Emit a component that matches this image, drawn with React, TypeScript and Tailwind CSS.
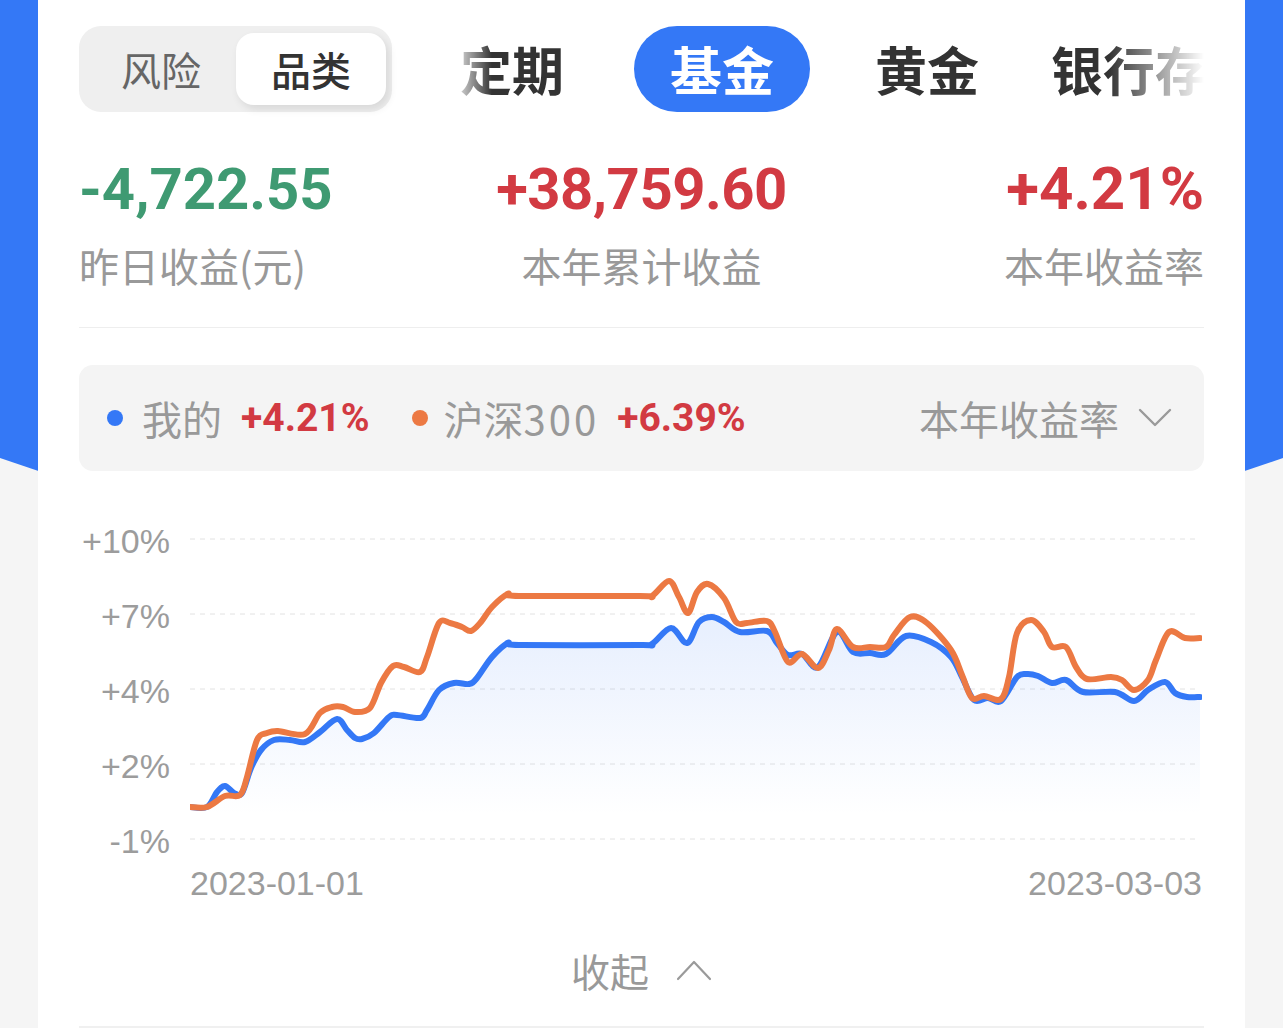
import React from "react";

const CJK = "font-['Noto_Sans_CJK_SC',sans-serif]";
const NUM = "font-['Roboto','Noto_Sans_CJK_SC',sans-serif]";
const AXIS = "font-['Liberation_Sans','Noto_Sans_CJK_SC',sans-serif]";

type Pt = [number, number];

const MINE: Pt[] = [
  [190, 807], [207, 807], [217, 792], [225, 786], [234, 793], [242, 793], [251, 768], [261, 750],
  [274, 740], [290, 740], [305, 742], [320, 732], [337, 719], [347, 730], [355, 738], [362, 739],
  [374, 733], [389, 717], [397, 715], [420, 718], [427, 710], [439, 690], [454, 683], [469, 684],
  [477, 678], [492, 657], [508, 643], [519, 645], [640, 645], [652, 644], [671, 628], [687, 643],
  [699, 622], [712, 617], [724, 622], [740, 632], [767, 631], [777, 643], [788, 655], [802, 654],
  [818, 667], [837, 632], [853, 652], [870, 653], [886, 654], [906, 636], [931, 642], [951, 657],
  [962, 677], [974, 700], [988, 698], [1001, 701], [1017, 677], [1027, 674], [1038, 676], [1052, 683],
  [1066, 680], [1083, 692], [1115, 692], [1134, 701], [1148, 690], [1165, 682], [1175, 693], [1187, 697],
  [1200, 697],
];

const HS300: Pt[] = [
  [190, 807], [207, 807], [225, 796], [240, 795], [247, 777], [257, 740], [267, 733], [278, 731],
  [305, 734], [320, 713], [332, 707], [343, 707], [355, 712], [370, 708], [381, 683], [393, 666],
  [404, 667], [420, 672], [427, 657], [439, 623], [450, 623], [462, 627], [471, 631], [481, 622],
  [492, 607], [508, 594], [519, 596], [640, 596], [652, 596], [669, 581], [679, 597], [688, 613],
  [697, 592], [708, 584], [724, 598], [736, 622], [747, 623], [767, 621], [775, 632], [788, 662],
  [802, 654], [818, 668], [829, 650], [837, 629], [853, 647], [870, 647], [886, 647], [894, 635],
  [910, 617], [927, 623], [951, 650], [962, 675], [972, 698], [984, 696], [1001, 699], [1009, 677],
  [1017, 633], [1031, 620], [1044, 632], [1052, 647], [1066, 647], [1076, 667], [1087, 679], [1111, 677],
  [1122, 680], [1134, 690], [1148, 680], [1156, 660], [1169, 632], [1185, 638], [1200, 638],
];

// catmull-rom -> cubic bezier
function smoothPath(pts: Pt[]) {
  let d = `M${pts[0][0]},${pts[0][1]}`;
  for (let i = 0; i < pts.length - 1; i++) {
    const p0 = pts[i - 1] || pts[i];
    const p1 = pts[i];
    const p2 = pts[i + 1];
    const p3 = pts[i + 2] || p2;
    const c1x = p1[0] + (p2[0] - p0[0]) / 6;
    const c1y = p1[1] + (p2[1] - p0[1]) / 6;
    const c2x = p2[0] - (p3[0] - p1[0]) / 6;
    const c2y = p2[1] - (p3[1] - p1[1]) / 6;
    d += ` C${c1x.toFixed(1)},${c1y.toFixed(1)} ${c2x.toFixed(1)},${c2y.toFixed(1)} ${p2[0]},${p2[1]}`;
  }
  return d;
}

const Y_LABELS = ["+10%", "+7%", "+4%", "+2%", "-1%"];
const GRID_Y = [539, 614, 689, 764, 839];

function Chart() {
  const mine = smoothPath(MINE);
  const hs = smoothPath(HS300);
  return (
    <svg width={1012} height={340} viewBox="190 521 1012 340" className="block">
      <defs>
        <linearGradient id="mineFill" x1="0" y1="600" x2="0" y2="815" gradientUnits="userSpaceOnUse">
          <stop offset="0" stopColor="#3478f6" stopOpacity="0.13" />
          <stop offset="1" stopColor="#3478f6" stopOpacity="0" />
        </linearGradient>
      </defs>
      {GRID_Y.map((y) => (
        <line key={y} x1={190} x2={1200} y1={y} y2={y} stroke="#e2e2e2" strokeWidth={1} strokeDasharray="5 5" />
      ))}
      <path d={`${mine} L1200,839 L190,839 Z`} fill="url(#mineFill)" />
      <path d={mine} fill="none" stroke="#3478f6" strokeWidth={6} strokeLinejoin="round" strokeLinecap="round" />
      <path d={hs} fill="none" stroke="#ec7943" strokeWidth={6} strokeLinejoin="round" strokeLinecap="round" />
    </svg>
  );
}

export default function App() {
  return (
    <div className="relative min-h-screen overflow-hidden bg-[#f5f5f5]">
      {/* blue header backdrop */}
      <div className="absolute inset-x-0 top-0 h-[700px] bg-[#3478f6] [clip-path:polygon(0_0,100%_0,100%_458px,50%_675px,0_458px)]" />

      <div className="relative mx-[38px] min-h-[1028px] bg-white px-[41px] pt-[26px]">
        {/* header row */}
        <div className="flex items-center">
          <div className="flex h-[86px] w-[313px] shrink-0 rounded-[22px] bg-[#efefef] p-[7px] pr-[6px]">
            <div className={`flex flex-1 items-center justify-center text-[40px] leading-none text-[#666] ${CJK}`}>风险</div>
            <div className={`flex w-[150px] items-center justify-center rounded-[18px] bg-white text-[40px] font-medium leading-none text-[#333] shadow-[3px_4px_8px_rgba(0,0,0,0.1)] ${CJK}`}>
              品类
            </div>
          </div>
          <div
            className={`flex min-w-0 flex-1 items-center overflow-hidden whitespace-nowrap text-[52px] font-bold leading-none text-[#333] ${CJK} [mask-image:linear-gradient(to_right,transparent_58px,black_100px,black_calc(100%_-_95px),transparent)]`}
          >
            <span className="ml-[68px] shrink-0">定期</span>
            <span className="ml-[70px] flex h-[86px] shrink-0 items-center rounded-full bg-[#3478f6] px-[36px] text-white">基金</span>
            <span className="ml-[65px] shrink-0">黄金</span>
            <span className="ml-[72px] shrink-0">银行存款</span>
            <span className="ml-[70px] shrink-0">保险</span>
          </div>
        </div>

        {/* stats */}
        <div className="mt-[47px] grid grid-cols-3">
          <div className="text-left">
            <div className={`text-[58px] font-bold leading-[60px] text-[#3f9a72] ${NUM}`}>-4,722.55</div>
            <div className={`mt-[26px] text-[40px] leading-[40px] text-[#999] ${CJK}`}>昨日收益(元)</div>
          </div>
          <div className="text-center">
            <div className={`text-[58px] font-bold leading-[60px] tracking-[-0.5px] text-[#d23a42] ${NUM}`}>+38,759.60</div>
            <div className={`mt-[26px] text-[40px] leading-[40px] text-[#999] ${CJK}`}>本年累计收益</div>
          </div>
          <div className="text-right">
            <div className={`text-[60px] font-bold leading-[60px] text-[#d23a42] ${NUM}`}>+4.21%</div>
            <div className={`mt-[26px] text-[40px] leading-[40px] text-[#999] ${CJK}`}>本年收益率</div>
          </div>
        </div>

        <div className="mt-[42px] h-px bg-[#eeeeee]" />

        {/* legend */}
        <div className="mt-[37px] flex h-[106px] items-center rounded-[14px] bg-[#f4f4f4] pl-[28px] pr-[32px]">
          <span className="h-[16px] w-[16px] shrink-0 rounded-full bg-[#3478f6]" />
          <span className={`ml-[19px] text-[40px] leading-none text-[#999] ${CJK}`}>我的</span>
          <span className={`ml-[19px] text-[39px] font-bold leading-none text-[#d23a42] ${NUM}`}>+4.21%</span>
          <span className="ml-[42px] h-[16px] w-[16px] shrink-0 rounded-full bg-[#ec7943]" />
          <span className={`ml-[16px] text-[40px] leading-none text-[#999] ${CJK}`}>沪深<span className="tracking-[3px]">300</span></span>
          <span className={`ml-[18px] text-[39px] font-bold leading-none text-[#d23a42] ${NUM}`}>+6.39%</span>
          <span className={`ml-auto text-[40px] leading-none text-[#999] ${CJK}`}>本年收益率</span>
          <svg width="34" height="20" viewBox="0 0 34 20" className="ml-[19px]">
            <polyline points="2,2 17,17 32,2" fill="none" stroke="#9a9a9a" strokeWidth="2.4" strokeLinejoin="round" strokeLinecap="round" />
          </svg>
        </div>

        {/* chart */}
        <div className="mt-[50px] flex">
          <div className={`flex w-[91px] flex-col gap-[35px] text-right text-[34px] leading-[40px] text-[#9c9c9c] ${AXIS}`}>
            {Y_LABELS.map((l) => (
              <div key={l} className="h-[40px]">{l}</div>
            ))}
          </div>
          <div className="ml-[20px]">
            <Chart />
          </div>
        </div>
        <div className={`mt-[5px] flex justify-between pl-[111px] pr-[2px] text-[34px] leading-[34px] text-[#9c9c9c] ${AXIS}`}>
          <span>2023-01-01</span>
          <span>2023-03-03</span>
        </div>

        {/* collapse */}
        <div className="mt-[50px] flex items-center justify-center">
          <span className={`text-[39px] leading-[40px] text-[#999] ${CJK}`}>收起</span>
          <svg width="36" height="22" viewBox="0 0 36 22" className="ml-[27px]">
            <polyline points="2,20 18,3 34,20" fill="none" stroke="#9a9a9a" strokeWidth="2.2" strokeLinejoin="round" strokeLinecap="round" />
          </svg>
        </div>

        <div className="mt-[36px] h-[2px] bg-[#f0f0f0]" />
      </div>
    </div>
  );
}
